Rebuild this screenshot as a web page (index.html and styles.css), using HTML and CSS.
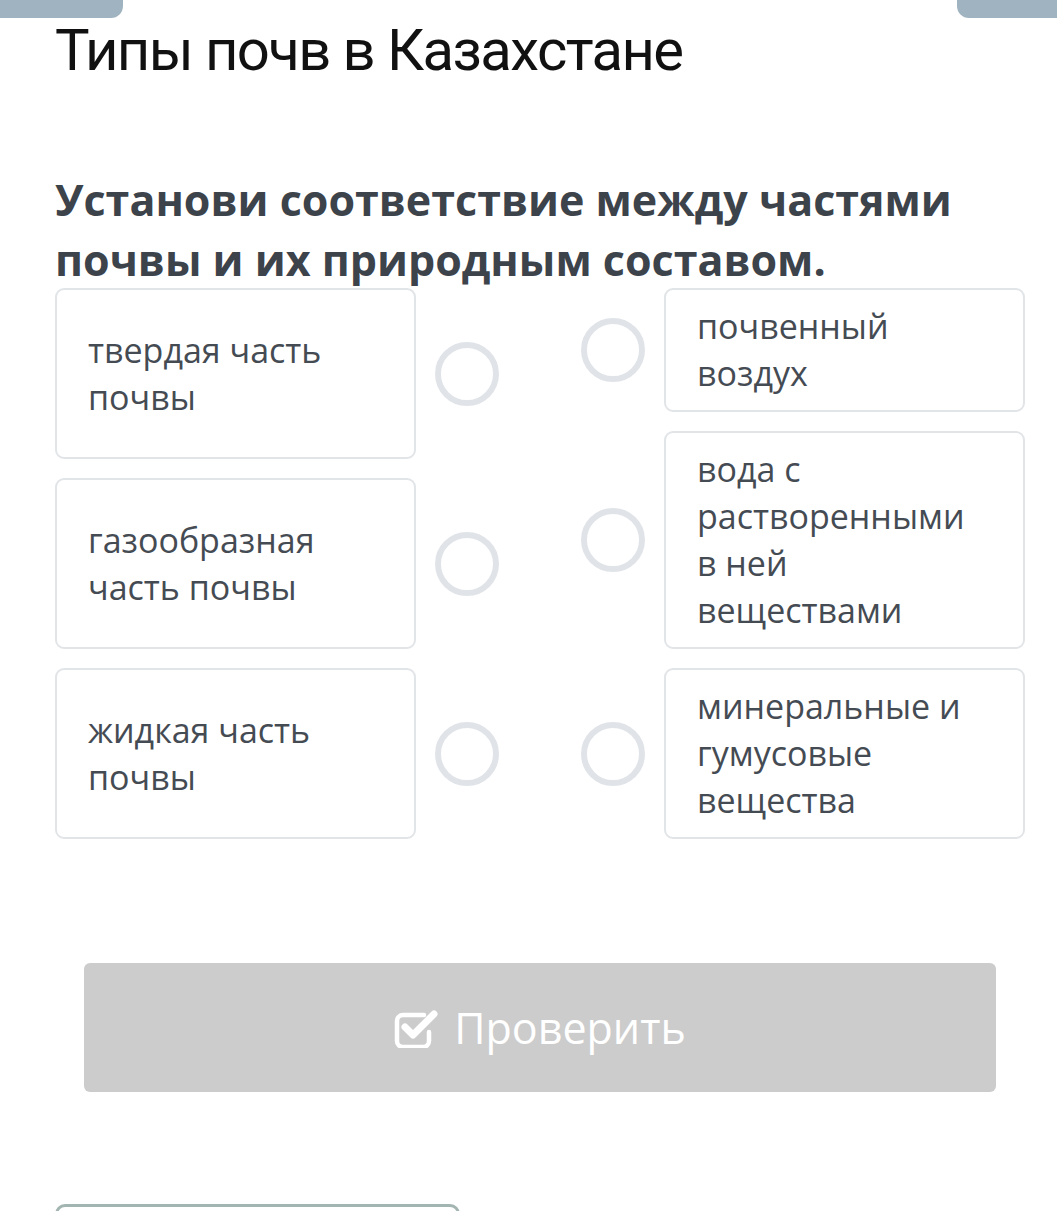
FILE: index.html
```html
<!DOCTYPE html>
<html lang="ru">
<head>
  <meta charset="UTF-8">
  <meta name="viewport" content="width=device-width, initial-scale=1.0">
  <title>Типы почв в Казахстане</title>
  <link rel="stylesheet" href="styles.css">
</head>
<body>
  <div class="tabs">
    <span class="tab tab-left"></span>
    <span class="tab tab-right"></span>
  </div>
  <main class="page">
    <h1 class="title">Типы почв в Казахстане</h1>
    <p class="question">Установи соответствие между частями почвы и их природным составом.</p>

    <!-- Matching columns -->
    <div class="match">
      <div class="column">
        <div class="item">
          <div class="card card-left">твердая часть почвы</div>
          <span class="dot"></span>
        </div>
        <div class="item">
          <div class="card card-left">газообразная часть почвы</div>
          <span class="dot"></span>
        </div>
        <div class="item">
          <div class="card card-left">жидкая часть почвы</div>
          <span class="dot"></span>
        </div>
      </div>
      <div class="column">
        <div class="item">
          <span class="dot"></span>
          <div class="card">почвенный воздух</div>
        </div>
        <div class="item">
          <span class="dot"></span>
          <div class="card">вода с растворенными в ней веществами</div>
        </div>
        <div class="item">
          <span class="dot"></span>
          <div class="card">минеральные и гумусовые вещества</div>
        </div>
      </div>
    </div>

    <button class="check-btn" type="button">
      <svg class="check-icon" width="44" height="40" viewBox="0 0 44 40">
        <path d="M30 7 H9 a6 6 0 0 0 -6 6 v20 a6 6 0 0 0 6 6 h20 a6 6 0 0 0 6 -6 v-9" fill="none" stroke="#fff" stroke-width="4.5" stroke-linecap="round"/>
        <path d="M11 19 L19 27 L40 6" fill="none" stroke="#fff" stroke-width="7" stroke-linecap="round" stroke-linejoin="round"/>
      </svg>
      <span>Проверить</span>
    </button>

    <div class="next-block"></div>
  </main>
</body>
</html>
```

FILE: styles.css
```css
body {
  margin: 0;
  font-family: "Open Sans", Arial, sans-serif;
  background: #fff;
  color: #454b53;
  overflow: hidden;
}
.tabs {
  display: flex;
  justify-content: space-between;
  height: 18px;
}
.tab {
  display: block;
  background: #9fb3c0;
  height: 18px;
}
.tab-left {
  width: 123px;
  border-bottom-right-radius: 12px;
}
.tab-right {
  width: 100px;
  border-bottom-left-radius: 12px;
}
.page {
  padding: 0 32px 0 55px;
}
.title {
  margin: -2px 0 0;
  font-family: Roboto, Arial, sans-serif;
  font-weight: 400;
  font-size: 58px;
  line-height: 68px;
  letter-spacing: -1.6px;
  color: #111;
}
.question {
  margin: 86px 0 0;
  font-weight: 700;
  font-size: 43px;
  line-height: 60px;
  color: #3d434b;
}
.match {
  display: grid;
  grid-template-columns: 1fr 1fr;
  column-gap: 82px;
  margin-top: -2px;
}
.column {
  display: flex;
  flex-direction: column;
  gap: 19px;
}
.item {
  display: flex;
  align-items: center;
  gap: 19px;
}
.card {
  flex: 1;
  box-sizing: border-box;
  border: 2px solid #e2e5e8;
  border-radius: 9px;
  padding: 13px 31px;
  font-size: 34px;
  line-height: 47px;
}
.card-left {
  min-height: 171px;
  display: flex;
  align-items: center;
}
.dot {
  flex: none;
  box-sizing: border-box;
  width: 64px;
  height: 64px;
  border: 6px solid #e0e4e8;
  border-radius: 50%;
}
.check-btn {
  display: flex;
  align-items: center;
  justify-content: center;
  gap: 16px;
  width: calc(100% - 58px);
  height: 129px;
  margin: 124px 29px 0;
  border: 0;
  border-radius: 6px;
  background: #cccccc;
  color: #fff;
  font-family: "Open Sans", Arial, sans-serif;
  font-size: 43px;
}
.next-block {
  width: 405px;
  height: 20px;
  margin-top: 112px;
  box-sizing: border-box;
  border: 3px solid #a3b5b1;
  border-bottom: 0;
  border-radius: 10px 10px 0 0;
}
```
